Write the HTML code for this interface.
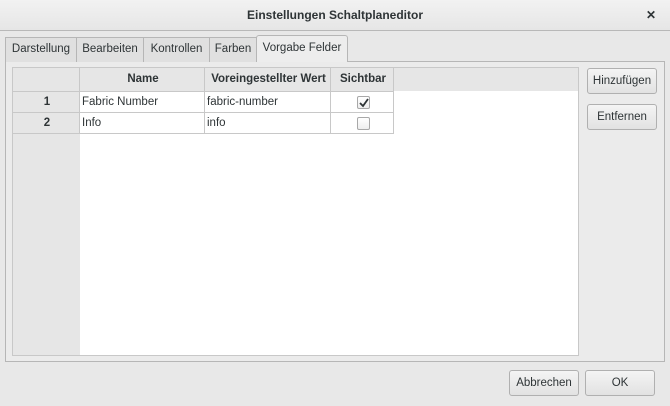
<!DOCTYPE html>
<html><head><style>
*{box-sizing:border-box;margin:0;padding:0}
body{width:670px;height:406px;background:#e8e8e8;font-family:"Liberation Sans",sans-serif;font-size:11.5px;color:#2e3436;position:relative;overflow:hidden}
.abs{position:absolute}
.title{left:0;top:0;width:670px;height:31px;background:linear-gradient(#f2f2f2,#e6e6e6);border-bottom:1px solid #b8b8b8;text-align:center;line-height:30px;font-weight:bold;font-size:12px}
.x{right:14px;top:0;line-height:30px;font-weight:bold;font-size:12px}
.tab{top:37px;height:25px;border:1px solid #b6b6b6;border-bottom:none;background:#e0e0e0;line-height:23px;text-align:center}
.tab.a{background:#ededed;top:35px;height:27px;line-height:25px;border-radius:3px 3px 0 0}
.nb{left:5px;top:61px;width:660px;height:301px;border:1px solid #b6b6b6;background:#ebebeb}
.tbl{left:12px;top:67px;width:567px;height:289px;background:#e6e6e6;border:1px solid #c8c8c8}
.white{left:80px;top:91px;width:498px;height:264px;background:#fff}
.c{border:1px solid #c8c8c8;background:#fff;height:22px;line-height:20px;padding-left:2px;margin:-1px 0 0 -1px}
.h{background:#e6e6e6;font-weight:bold;text-align:center;height:25px;line-height:23px}
.rh{background:#e6e6e6;text-align:center;font-weight:bold}
.btn{height:26px;border:1px solid #b0b0b0;border-radius:3px;background:linear-gradient(#f4f4f4,#e2e2e2);text-align:center;line-height:24px}
.cb{width:13px;height:13px;border:1px solid #a8a8a8;border-radius:2px;background:linear-gradient(#fff,#eee);margin:4px auto 0}
</style></head><body>
<div class="abs title">Einstellungen Schaltplaneditor</div>
<div class="abs x">✕</div>
<div class="abs nb"></div>
<div class="abs tab" style="left:5px;width:72px">Darstellung</div>
<div class="abs tab" style="left:76px;width:68px">Bearbeiten</div>
<div class="abs tab" style="left:143px;width:67px">Kontrollen</div>
<div class="abs tab" style="left:209px;width:48px">Farben</div>
<div class="abs tab a" style="left:256px;width:92px">Vorgabe Felder</div>
<div class="abs tbl"></div>
<div class="abs white"></div>
<div class="abs c h" style="left:13px;top:68px;width:68px"></div>
<div class="abs c h" style="left:80px;top:68px;width:126px">Name</div>
<div class="abs c h" style="left:205px;top:68px;width:127px">Voreingestellter Wert</div>
<div class="abs c h" style="left:331px;top:68px;width:64px">Sichtbar</div>
<div class="abs c rh" style="left:13px;top:92px;width:68px">1</div>
<div class="abs c" style="left:80px;top:92px;width:126px">Fabric Number</div>
<div class="abs c" style="left:205px;top:92px;width:127px">fabric-number</div>
<div class="abs c" style="left:331px;top:92px;width:64px"><div class="cb" style="position:relative"><svg style="position:absolute;left:1px;top:1px" width="10" height="10"><path d="M1 5 L4 8 L9 1" stroke="#2e3436" stroke-width="1.8" fill="none"/></svg></div></div>
<div class="abs c rh" style="left:13px;top:113px;width:68px">2</div>
<div class="abs c" style="left:80px;top:113px;width:126px">Info</div>
<div class="abs c" style="left:205px;top:113px;width:127px">info</div>
<div class="abs c" style="left:331px;top:113px;width:64px"><div class="cb"></div></div>
<div class="abs btn" style="left:587px;top:68px;width:70px">Hinzufügen</div>
<div class="abs btn" style="left:587px;top:104px;width:70px">Entfernen</div>
<div class="abs btn" style="left:509px;top:370px;width:70px">Abbrechen</div>
<div class="abs btn" style="left:585px;top:370px;width:70px">OK</div>
</body></html>
